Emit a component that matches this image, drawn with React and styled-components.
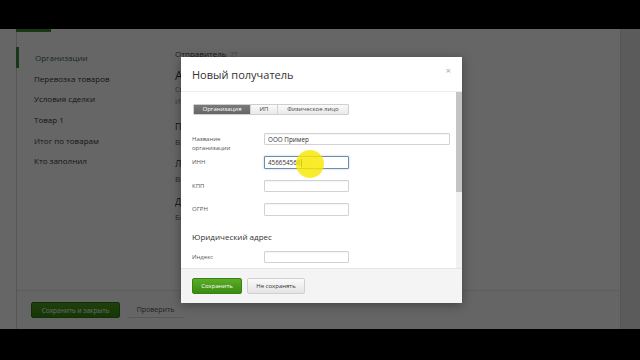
import React from 'react';
import styled, { createGlobalStyle } from 'styled-components';

const Global = createGlobalStyle`
  html, body { margin: 0; padding: 0; background: #000; }
  body { font-family: "Open Sans", "Noto Sans", sans-serif; }
  * { box-sizing: border-box; }
`;

const Screen = styled.div`
  width: 640px;
  height: 360px;
  background: #000;
  display: flex;
  flex-direction: column;
  overflow: hidden;
`;

const Letterbox = styled.div`
  flex: none;
  height: ${p => p.$h}px;
  background: #000;
`;

const Stage = styled.div`
  position: relative;
  flex: none;
  height: 300px;
  background: #fff;
  display: flex;
  padding-left: 16px;
`;

const Panel = styled.div`
  flex: 1;
  display: flex;
  flex-direction: column;
  border-left: 1px solid #d6d6d6;
  position: relative;
`;

const TopAccent = styled.div`
  position: absolute;
  left: -1px;
  top: 0;
  width: 35px;
  height: 3px;
  background: #3f8a2a;
`;

const Body = styled.div`
  flex: 1;
  display: flex;
  min-height: 0;
`;

const Sidebar = styled.nav`
  width: 158px;
  flex: none;
  padding-top: 18px;
  display: flex;
  flex-direction: column;
`;

const NavItem = styled.div`
  height: 20.7px;
  display: flex;
  align-items: center;
  padding-left: ${p => (p.$active ? '16px' : '17px')};
  margin-left: ${p => (p.$active ? '-1px' : '0')};
  border-left: ${p => (p.$active ? '3px solid #3c8a3c' : 'none')};
  font-size: 8px;
  color: ${p => (p.$active ? '#3a6e45' : '#383838')};
  white-space: nowrap;
`;

const Main = styled.main`
  flex: 1;
  display: flex;
  flex-direction: column;
  padding-top: 19px;
  color: #444;
  min-width: 0;
`;

const SenderLabel = styled.div`
  font-size: 8px;
  line-height: 12px;
  color: #444;
  span { color: #aaa; margin-left: 4px; }
`;

const OrgName = styled.div`
  font-size: 12px;
  line-height: 16px;
  margin-top: 8px;
  color: #333;
`;

const SmallLine = styled.div`
  font-size: 7px;
  line-height: 12px;
  color: #888;
`;

const InfoBlock = styled.div`
  margin-top: ${p => p.$mt || 0}px;
  display: flex;
  flex-direction: column;
`;

const InfoLabel = styled.div`
  font-size: 9px;
  line-height: 14px;
  color: #333;
`;

const InfoValue = styled.div`
  font-size: 8px;
  line-height: 16px;
  color: #666;
`;

const PageFooter = styled.div`
  flex: none;
  height: 39px;
  border-top: 1px solid #ececec;
  background: #fcfcfc;
  display: flex;
  align-items: center;
  gap: 7px;
  padding-left: 14px;
`;

const PrimaryBig = styled.div`
  width: 89px;
  height: 16px;
  border-radius: 2px;
  background: linear-gradient(#4fa21f, #3a8611);
  border: 1px solid #2f7409;
  color: #fff;
  font-size: 6.5px;
  display: flex;
  align-items: center;
  justify-content: center;
`;

const LinkButton = styled.div`
  width: 57px;
  height: 16px;
  border-bottom: 1px solid #ddd;
  font-size: 7px;
  color: #555;
  display: flex;
  align-items: center;
  justify-content: center;
`;

const RightRail = styled.div`
  width: 20px;
  flex: none;
  background: #e4e4e4;
  border-left: 1px solid #d8d8d8;
`;

const Overlay = styled.div`
  position: absolute;
  inset: 0;
  background: rgba(0, 0, 0, 0.6);
`;

const Modal = styled.div`
  position: absolute;
  left: 181px;
  top: 28px;
  width: 281px;
  height: 246px;
  background: #fff;
  box-shadow: 0 2px 10px rgba(0, 0, 0, 0.35);
  display: flex;
  flex-direction: column;
  color: #333;
`;

const ModalHeader = styled.div`
  flex: none;
  height: 35px;
  border-bottom: 1px solid #ececec;
  display: flex;
  align-items: center;
  justify-content: space-between;
  padding: 0 11px 0 11px;
`;

const Title = styled.div`
  font-size: 11px;
  color: #333;
`;

const Close = styled.div`
  font-size: 9px;
  color: #a8a8a8;
  line-height: 1;
  margin-top: -8px;
`;

const ModalBody = styled.div`
  flex: 1;
  min-height: 0;
  display: flex;
  overflow: hidden;
`;

const BodyContent = styled.div`
  flex: 1;
  padding: 12px 0 0 11px;
  display: flex;
  flex-direction: column;
`;

const ScrollTrack = styled.div`
  width: 6px;
  flex: none;
  background: #f1f1f1;
  display: flex;
  flex-direction: column;
`;

const ScrollThumb = styled.div`
  height: 100px;
  background: #c4c4c4;
`;

const Segmented = styled.div`
  display: flex;
  align-self: flex-start;
  margin-left: 1px;
  height: 14px;
  border: 1px solid #cfcfcf;
  border-radius: 1px;
  overflow: hidden;
`;

const Segment = styled.div`
  width: ${p => p.$w}px;
  display: flex;
  align-items: center;
  justify-content: center;
  font-size: 6px;
  color: ${p => (p.$active ? '#fff' : '#444')};
  background: ${p => (p.$active ? 'linear-gradient(#7a7a7a, #666)' : 'linear-gradient(#fafafa, #e9e9e9)')};
  border-left: ${p => (p.$first ? 'none' : '1px solid #d4d4d4')};
`;

const FormRow = styled.div`
  display: grid;
  grid-template-columns: 72px auto;
  align-items: start;
  height: 23.5px;
`;

const FieldLabel = styled.div`
  font-size: 6px;
  line-height: 9px;
  padding-top: 2px;
  color: #555;
`;

const Field = styled.div`
  position: relative;
  width: ${p => p.$w}px;
  height: 12.5px;
  border: 1px solid ${p => (p.$focused ? '#6a8db0' : '#d2d2d2')};
  box-shadow: ${p => (p.$focused ? '0 0 2px rgba(80,130,190,0.5)' : 'inset 0 1px 1px rgba(0,0,0,0.04)')};
  border-radius: 1px;
  background: #fff;
  display: flex;
  align-items: center;
  padding-left: 3px;
  font-size: 6.3px;
  color: #333;
`;

const Caret = styled.span`
  display: inline-block;
  width: 1px;
  height: 8px;
  background: #222;
  margin-left: 0.5px;
`;

const FormList = styled.div`
  margin-top: 18px;
  display: flex;
  flex-direction: column;
`;

const SectionTitle = styled.div`
  margin-top: 4px;
  margin-bottom: 8px;
  font-size: 8px;
  line-height: 12px;
  color: #333;
`;

const ModalFooter = styled.div`
  flex: none;
  height: 35px;
  border-top: 1px solid #e4e4e4;
  background: #f4f4f4;
  display: flex;
  align-items: center;
  gap: 5px;
  padding-left: 11px;
  padding-bottom: 1px;
`;

const Button = styled.div`
  width: ${p => p.$w}px;
  height: 16px;
  border-radius: 2px;
  display: flex;
  align-items: center;
  justify-content: center;
  font-size: 6px;
  color: ${p => (p.$primary ? '#fff' : '#333')};
  background: ${p => (p.$primary ? 'linear-gradient(#5aad27, #3b8b12)' : 'linear-gradient(#fafafa, #e4e4e4)')};
  border: 1px solid ${p => (p.$primary ? '#3a8012' : '#d0d0d0')};
`;

const CursorHighlight = styled.div`
  position: absolute;
  left: 296px;
  top: 121px;
  width: 28px;
  height: 28px;
  border-radius: 50%;
  background: radial-gradient(circle, rgba(248, 232, 0, 0.85) 0%, rgba(248, 232, 0, 0.8) 80%, rgba(248, 232, 0, 0.3) 100%);
  pointer-events: none;
`;

const navItems = ['Организации', 'Перевозка товаров', 'Условия сделки', 'Товар 1', 'Итог по товарам', 'Кто заполнил'];

export default function App() {
  return (
    <>
      <Global />
      <Screen>
        <Letterbox $h={29} />
        <Stage>
          <Panel>
            <TopAccent />
            <Body>
              <Sidebar>
                {navItems.map((t, i) => (
                  <NavItem key={t} $active={i === 0}>{t}</NavItem>
                ))}
              </Sidebar>
              <Main>
                <SenderLabel>Отправитель<span>??</span></SenderLabel>
                <OrgName>АО «Ветер»</OrgName>
                <SmallLine>Сменить</SmallLine>
                <SmallLine>ИНН</SmallLine>
                <InfoBlock $mt={12}>
                  <InfoLabel>Получатель</InfoLabel>
                  <InfoValue>Выбрать</InfoValue>
                </InfoBlock>
                <InfoBlock $mt={7}>
                  <InfoLabel>Лицо</InfoLabel>
                  <InfoValue>Выбрать</InfoValue>
                </InfoBlock>
                <InfoBlock $mt={8}>
                  <InfoLabel>Дата</InfoLabel>
                  <InfoValue>Без даты</InfoValue>
                </InfoBlock>
              </Main>
            </Body>
            <PageFooter>
              <PrimaryBig>Сохранить и закрыть</PrimaryBig>
              <LinkButton>Проверить</LinkButton>
            </PageFooter>
          </Panel>
          <RightRail />
          <Overlay />
          <Modal>
            <ModalHeader>
              <Title>Новый получатель</Title>
              <Close>×</Close>
            </ModalHeader>
            <ModalBody>
              <BodyContent>
                <Segmented>
                  <Segment $first $active $w={56}>Организация</Segment>
                  <Segment $w={27}>ИП</Segment>
                  <Segment $w={71}>Физическое лицо</Segment>
                </Segmented>
                <FormList>
                  <FormRow>
                    <FieldLabel>Название<br />организации</FieldLabel>
                    <Field $w={186}>ООО Пример</Field>
                  </FormRow>
                  <FormRow>
                    <FieldLabel>ИНН</FieldLabel>
                    <Field $w={85} $focused>456654568<Caret /></Field>
                  </FormRow>
                  <FormRow>
                    <FieldLabel>КПП</FieldLabel>
                    <Field $w={85} />
                  </FormRow>
                  <FormRow>
                    <FieldLabel>ОГРН</FieldLabel>
                    <Field $w={85} />
                  </FormRow>
                </FormList>
                <SectionTitle>Юридический адрес</SectionTitle>
                <FormRow>
                  <FieldLabel>Индекс</FieldLabel>
                  <Field $w={85} />
                </FormRow>
              </BodyContent>
              <ScrollTrack>
                <ScrollThumb />
              </ScrollTrack>
            </ModalBody>
            <ModalFooter>
              <Button $primary $w={50}>Сохранить</Button>
              <Button $w={58}>Не сохранять</Button>
            </ModalFooter>
          </Modal>
          <CursorHighlight />
        </Stage>
        <Letterbox $h={31} />
      </Screen>
    </>
  );
}
